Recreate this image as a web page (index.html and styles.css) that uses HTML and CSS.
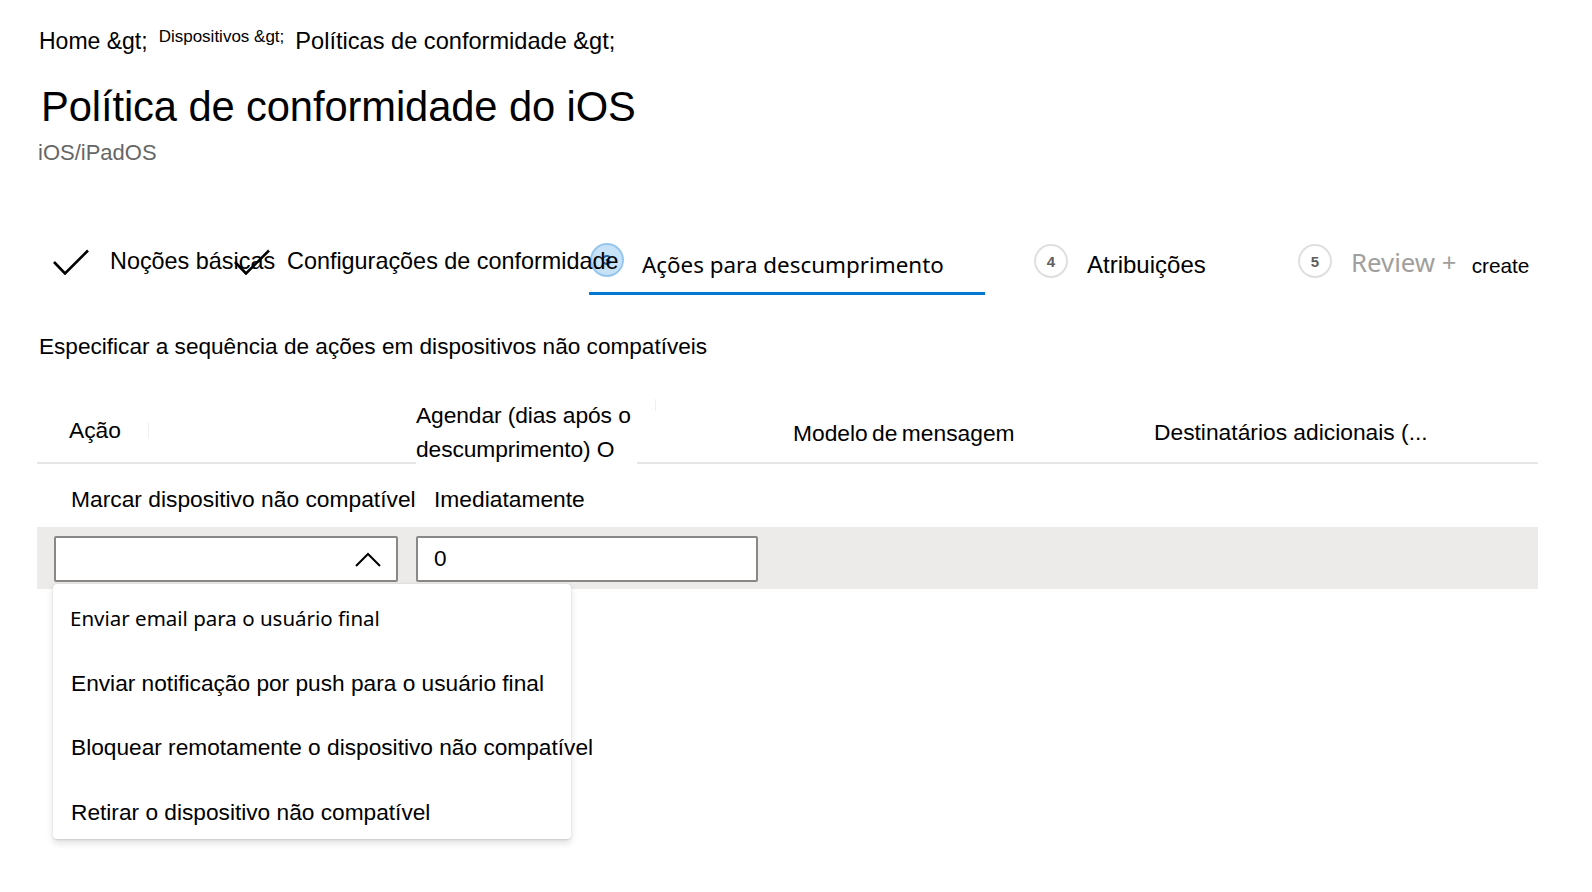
FILE: index.html
```html
<!DOCTYPE html>
<html lang="pt">
<head>
<meta charset="utf-8">
<title>Política de conformidade do iOS</title>
<link rel="stylesheet" href="styles.css">
</head>
<body>
<div class="page">
  <nav class="crumbs">
    <span class="crumb">Home &amp;gt;</span>
    <span class="crumb small">Dispositivos &amp;gt;</span>
    <span class="crumb wide">Políticas de conformidade &amp;gt;</span>
  </nav>
  <h1 class="title">Política de conformidade do iOS</h1>
  <div class="subtitle">iOS/iPadOS</div>

  <div class="steps">
    <div class="step s1">
      <svg class="check" viewBox="0 0 36 26" width="36" height="26"><polyline points="1,13 12,24.5 35,1.5" fill="none" stroke="#000" stroke-width="2.6"/></svg>
      <span class="step-label">Noções básicas</span>
    </div>
    <div class="step s2">
      <svg class="check" viewBox="0 0 36 26" width="36" height="26"><polyline points="1,13 12,24.5 35,1.5" fill="none" stroke="#000" stroke-width="2.6"/></svg>
      <span class="step-label">Configurações de conformidade</span>
    </div>
    <div class="step s3">
      <span class="num num-active">3</span>
      <span class="step-label active-label">Ações para descumprimento</span>
    </div>
    <div class="step s4">
      <span class="num">4</span>
      <span class="step-label big">Atribuições</span>
    </div>
    <div class="step s5">
      <span class="num">5</span>
      <span class="review">Review +</span>
      <span class="create">create</span>
    </div>
  </div>

  <p class="desc">Especificar a sequência de ações em dispositivos não compatíveis</p>

  <div class="table">
    <div class="thead">
      <div class="th th-acao">Ação<span class="grip"></span></div>
      <div class="th th-agendar"><span class="agendar-text">Agendar (dias após o<br>descumprimento) O</span><span class="grip grip-top"></span></div>
      <div class="th th-modelo">Modelo de mensagem</div>
      <div class="th th-dest">Destinatários adicionais (...</div>
    </div>
    <div class="trow">
      <div class="td td-acao">Marcar dispositivo não compatível</div>
      <div class="td td-agendar">Imediatamente</div>
    </div>
    <div class="trow edit">
      <div class="td td-select">
        <div class="select">
          <svg class="chevron" viewBox="0 0 26 15" width="26" height="15"><polyline points="1,14 13,2 25,14" fill="none" stroke="#000" stroke-width="2"/></svg>
        </div>
        <ul class="menu">
          <li class="menu-item seg">Enviar email para o usuário final</li>
          <li class="menu-item">Enviar notificação por push para o usuário final</li>
          <li class="menu-item">Bloquear remotamente o dispositivo não compatível</li>
          <li class="menu-item">Retirar o dispositivo não compatível</li>
        </ul>
      </div>
      <div class="td td-input">
        <div class="input">0</div>
      </div>
    </div>
  </div>
</div>
</body>
</html>
```
FILE: styles.css
```css
* { box-sizing: border-box; }
html, body { margin: 0; padding: 0; background: #fff; }
body {
  font-family: "Liberation Sans", Arial, sans-serif;
  color: #000;
  width: 1592px;
  height: 892px;
  overflow: hidden;
}
.page { padding: 27px 0 0 39px; }

/* breadcrumb */
.crumbs { display: flex; align-items: flex-start; gap: 11px; height: 28px; }
.crumb { font-size: 23px; line-height: 28px; white-space: nowrap; }
.crumb.small { font-size: 17px; line-height: 18px; margin-top: 1px; }
.crumb.wide { font-size: 23.6px; }

/* title */
.title {
  margin: 27px 0 0 2px;
  font-size: 41.7px;
  font-weight: normal;
  line-height: 50px;
  letter-spacing: -0.1px;
}
.subtitle {
  margin: 7px 0 0 -1px;
  font-size: 22px;
  line-height: 28px;
  color: #666;
}

/* steps */
.steps { display: flex; margin: 74px 0 0 14px; height: 54px; align-items: flex-start; }
.step { display: flex; align-items: center; height: 40px; white-space: nowrap; flex: none; }
.s1 { width: 181px; }
.s2 { width: 355px; position: relative; z-index: 1; }
.s3 { width: 396px; margin-right: 49px; height: 54px; padding-bottom: 11px; border-bottom: 3px solid #0078d4; position: relative; z-index: 0; }
.s4 { width: 264px; }
.check { flex: none; margin-right: 21px; margin-top: 1px; }
.s2 .check { margin-right: 17px; }
.step-label { font-size: 23.4px; line-height: 28px; }
.active-label {
  font-family: "Noto Sans", "Liberation Sans", sans-serif;
  font-size: 22.4px;
  margin-top: 8px;
  margin-left: -1px;
}
.big { font-size: 24px; margin-top: 8px; }
.num {
  flex: none;
  width: 34px; height: 34px;
  border: 2px solid #e1dfdd;
  border-radius: 50%;
  display: flex; align-items: center; justify-content: center;
  font-size: 15px; font-weight: bold; color: #605e5c;
  margin-right: 19px;
}
.num-active {
  background: rgba(0, 120, 212, 0.22);
  border-color: rgba(0, 120, 212, 0.25);
  color: #1b5fa8;
  margin-left: 1px;
  margin-right: 19px;
  margin-top: -3px;
  position: relative;
  z-index: -1;
}
.review {
  font-family: "Noto Sans", "Liberation Sans", sans-serif;
  font-size: 25.8px; color: #a19f9d; margin-top: 2px;
}
.create { font-size: 20.8px; margin-left: 15px; margin-top: 10px; }

/* description */
.desc { margin: 38px 0 0 0; font-size: 22.6px; line-height: 28px; }

/* table */
.table { margin: 36px 0 0 -2px; width: 1501px; }
.thead {
  display: grid;
  grid-template-columns: 379px 377px 361px 1fr;
  height: 67px;
  border-bottom: 2px solid #e6e6e6;
}
.th { font-size: 22.8px; line-height: 34px; display: flex; align-items: center; white-space: nowrap; }
.th-acao { padding-left: 32px; padding-bottom: 4px; }
.grip { width: 1px; height: 16px; background: #f0f0f0; margin-left: 27px; }
.th-agendar { align-items: flex-start; }
.agendar-text {
  display: block;
  background: #fff;
  width: 221px;
  height: 69px;
  margin-top: 1px;
  letter-spacing: -0.1px;
}
.grip-top { height: 12px; margin: 2px 0 0 18px; }
.th-modelo { word-spacing: -2px; padding-top: 2px; }
.th-dest { padding-bottom: 1px; }

.trow { display: grid; grid-template-columns: 379px 377px 1fr; }
.td { font-size: 22.8px; line-height: 28px; white-space: nowrap; }
.td-acao { padding: 21px 0 14px 34px; }
.td-agendar { padding: 21px 0 14px 18px; }

.edit { background: #edebe9; height: 62px; }
.td-select { padding: 9px 0 0 17px; position: relative; }
.select {
  width: 344px; height: 46px;
  background: #fff;
  border: 2px solid #8a8886;
  border-radius: 2px;
  display: flex; align-items: center; justify-content: flex-end;
  padding-right: 15px;
}
.chevron { display: block; }
.td-input { padding-top: 9px; }
.input {
  width: 342px; height: 46px;
  background: #fff;
  border: 2px solid #8a8886;
  border-radius: 2px;
  padding-left: 16px;
  font-size: 22.6px; line-height: 42px;
}

/* dropdown menu */
.menu {
  position: absolute;
  left: 16px; top: 57px;
  width: 518px; height: 255px;
  margin: 0; padding: 2px 0 0 0;
  list-style: none;
  background: #fff;
  border-radius: 4px;
  box-shadow: 0 3.2px 7.2px rgba(0,0,0,0.13), 0 0.6px 1.8px rgba(0,0,0,0.11);
  z-index: 5;
}
.menu-item {
  height: 64.5px;
  display: flex; align-items: center;
  padding-left: 18px;
  font-size: 22.7px;
  white-space: nowrap;
}
.menu-item.seg {
  font-family: "Noto Sans", "Liberation Sans", sans-serif;
  font-size: 20.5px;
  padding-left: 17px;
}
```
